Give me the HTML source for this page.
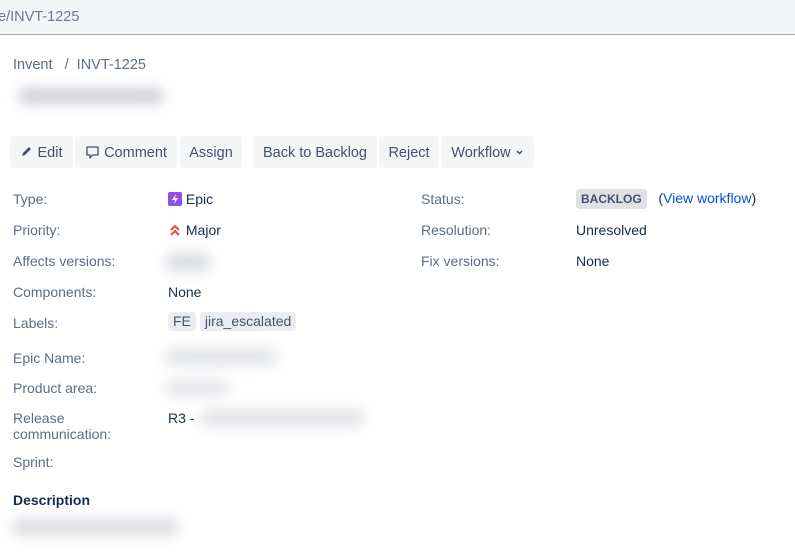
<!DOCTYPE html>
<html><head><style>
body{margin:0;width:795px;height:558px;overflow:hidden;background:#fff;font-family:"Liberation Sans",sans-serif;font-size:14px;color:#172b4d;position:relative}
.a{position:absolute;white-space:nowrap}
.top{position:absolute;left:0;top:0;width:795px;height:34px;background:#f4f5f7;border-bottom:1px solid #a5a8ad}
.lbl{color:#5e6c84}
.btn{position:absolute;top:136px;height:32px;background:#f4f5f7;border-radius:3px;line-height:34px;text-align:center;color:#42526e;font-size:14.5px}
.blur{position:absolute;background:#c9ccd2;filter:blur(6px);border-radius:8px}
.tag{display:inline-block;background:#ebecf0;border-radius:3px;padding:0 5px;color:#42526e;line-height:19px;margin-right:4px}
</style></head><body>
<div class="top"></div>
<div class="a" style="left:-2px;top:9px;color:#6b778c;font-size:14.5px">e/INVT-1225</div>
<div class="a lbl" style="left:13px;top:57px;font-size:14.5px">Invent&nbsp;&nbsp; / &nbsp;INVT-1225</div>
<div class="blur" style="left:18px;top:88px;width:146px;height:16px;background:#cdd0d5"></div>

<div class="btn" style="left:10px;width:63px"><svg width="13" height="13" viewBox="0 0 13 13" style="vertical-align:-1px"><path d="M2 11l1-3 6-6 2 2-6 6z" fill="#42526e"/></svg> Edit</div>
<div class="btn" style="left:75px;width:102px"><svg width="15" height="15" viewBox="0 0 15 15" style="vertical-align:-3px"><path d="M2 2h11v8H7.5l-2.5 3v-3H2z" fill="none" stroke="#42526e" stroke-width="1.3" stroke-linejoin="round"/></svg> Comment</div>
<div class="btn" style="left:180px;width:62px">Assign</div>
<div class="btn" style="left:253px;width:124px">Back to Backlog</div>
<div class="btn" style="left:379px;width:60px">Reject</div>
<div class="btn" style="left:441px;width:93px">Workflow <svg width="9" height="9" viewBox="0 0 9 9" style="vertical-align:0"><path d="M2 3l2.5 2.5L7 3" fill="none" stroke="#42526e" stroke-width="1.5"/></svg></div>

<div class="a lbl" style="left:13px;top:191px">Type:</div>
<div class="a" style="left:168px;top:191px"><svg width="14" height="14" viewBox="0 0 14 14" style="vertical-align:-2px"><rect width="14" height="14" rx="2" fill="#904ee2"/><path d="M8 2L4 8h3l-1 4 4-6H7z" fill="#fff"/></svg> Epic</div>
<div class="a lbl" style="left:13px;top:222px">Priority:</div>
<div class="a" style="left:168px;top:222px"><svg width="14" height="14" viewBox="0 0 14 14" style="vertical-align:-2px"><path d="M3 7l4-4 4 4M3 12l4-4 4 4" fill="none" stroke="#e5493a" stroke-width="2"/></svg> Major</div>
<div class="a lbl" style="left:13px;top:253px">Affects versions:</div>
<div class="blur" style="left:166px;top:252px;width:44px;height:20px;background:#dcdee2"></div>
<div class="a lbl" style="left:13px;top:284px">Components:</div>
<div class="a" style="left:168px;top:284px">None</div>
<div class="a lbl" style="left:13px;top:315px">Labels:</div>
<div class="a" style="left:168px;top:312px"><span class="tag">FE</span><span class="tag">jira_escalated</span></div>
<div class="a lbl" style="left:13px;top:350px">Epic Name:</div>
<div class="blur" style="left:165px;top:348px;width:112px;height:18px;background:#e3e5e8"></div>
<div class="a lbl" style="left:13px;top:380px">Product area:</div>
<div class="blur" style="left:165px;top:380px;width:64px;height:16px;background:#e3e5e8"></div>
<div class="a lbl" style="left:13px;top:410px;line-height:16px">Release<br>communication:</div>
<div class="a" style="left:168px;top:410px">R3 -</div>
<div class="blur" style="left:200px;top:409px;width:164px;height:18px;background:#e3e5e8"></div>
<div class="a lbl" style="left:13px;top:454px">Sprint:</div>
<div class="a" style="left:13px;top:492px;font-weight:bold">Description</div>
<div class="blur" style="left:12px;top:518px;width:166px;height:18px;background:#dcdee2"></div>

<div class="a lbl" style="left:421px;top:191px">Status:</div>
<div class="a" style="left:576px;top:189px"><span style="display:inline-block;background:#dfe1e6;border-radius:3px;padding:0 5px;font-size:12px;font-weight:bold;line-height:20px;color:#42526e">BACKLOG</span>&nbsp;&nbsp;&nbsp;(<span style="color:#0052cc">View workflow</span>)</div>
<div class="a lbl" style="left:421px;top:222px">Resolution:</div>
<div class="a" style="left:576px;top:222px">Unresolved</div>
<div class="a lbl" style="left:421px;top:253px">Fix versions:</div>
<div class="a" style="left:576px;top:253px">None</div>
</body></html>
